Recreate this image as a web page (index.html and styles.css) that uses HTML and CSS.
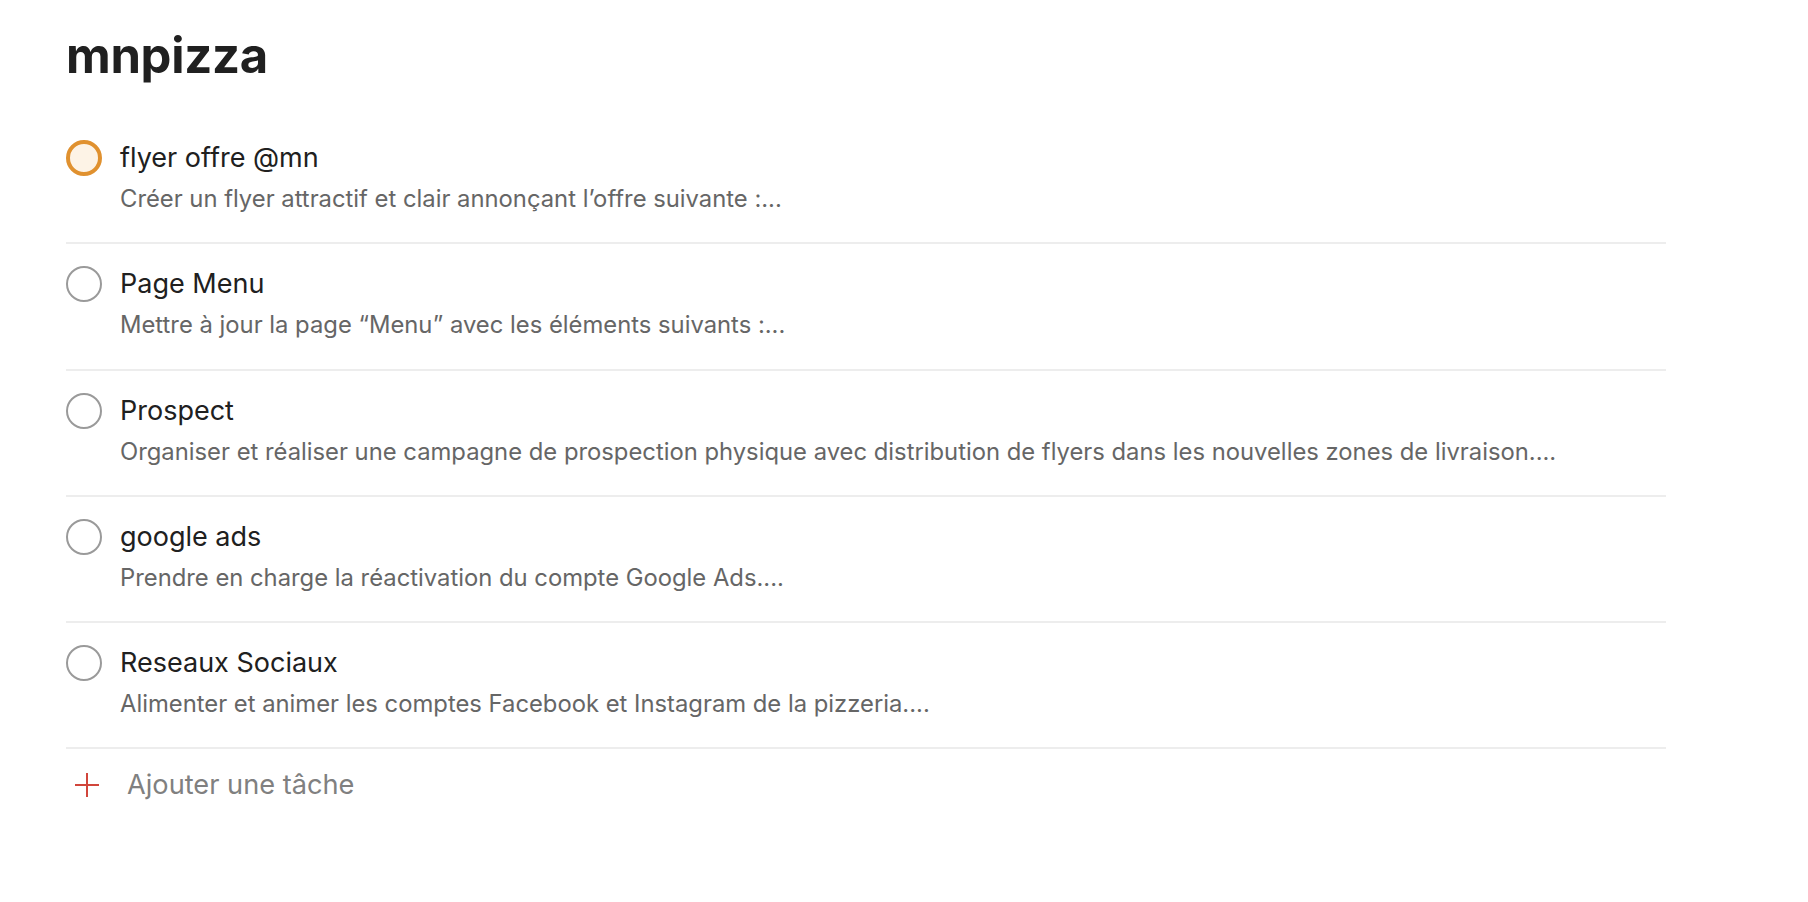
FILE: index.html
```html
<!DOCTYPE html>
<html lang="fr">
<head>
<meta charset="utf-8">
<title>mnpizza</title>
<link rel="stylesheet" href="styles.css">
</head>
<body>
<main class="page">
  <h1 class="project-title">mnpizza</h1>
  <ul class="task-list">
    <li class="task">
      <span class="check check-p3"></span>
      <div class="task-body">
        <div class="task-title">flyer offre @mn</div>
        <div class="task-desc">Créer un flyer attractif et clair annonçant l’offre suivante :...</div>
      </div>
    </li>
    <li class="task">
      <span class="check"></span>
      <div class="task-body">
        <div class="task-title">Page Menu</div>
        <div class="task-desc">Mettre à jour la page “Menu” avec les éléments suivants :...</div>
      </div>
    </li>
    <li class="task">
      <span class="check"></span>
      <div class="task-body">
        <div class="task-title">Prospect</div>
        <div class="task-desc">Organiser et réaliser une campagne de prospection physique avec distribution de flyers dans les nouvelles zones de livraison....</div>
      </div>
    </li>
    <li class="task">
      <span class="check"></span>
      <div class="task-body">
        <div class="task-title">google ads</div>
        <div class="task-desc">Prendre en charge la réactivation du compte Google Ads....</div>
      </div>
    </li>
    <li class="task">
      <span class="check"></span>
      <div class="task-body">
        <div class="task-title">Reseaux Sociaux</div>
        <div class="task-desc">Alimenter et animer les comptes Facebook et Instagram de la pizzeria....</div>
      </div>
    </li>
  </ul>
  <button class="add-task" type="button">
    <svg class="plus" width="26" height="26" viewBox="0 0 26 26" aria-hidden="true">
      <path d="M13 1v24M1 13h24" stroke="#d1453b" stroke-width="2" fill="none"/>
    </svg>
    <span class="add-label">Ajouter une tâche</span>
  </button>
</main>
</body>
</html>
```

FILE: styles.css
```css
* { box-sizing: border-box; }

html, body {
  margin: 0;
  padding: 0;
  background: #ffffff;
}

body {
  font-family: Inter, "Noto Sans", "Liberation Sans", sans-serif;
  color: #202020;
}

.page {
  width: 1600px;
  margin-left: 66px;
  padding-top: 27px;
}

.project-title {
  margin: 0 0 33px 0;
  font-size: 49px;
  line-height: 58px;
  font-weight: 700;
  color: #202020;
  letter-spacing: -0.3px;
}

.task-list {
  list-style: none;
  margin: 0;
  padding: 0;
}

.task {
  display: flex;
  gap: 18px;
  padding: 22px 0 27.25px 0;
  border-bottom: 2px solid #ededed;
}

.check {
  flex: 0 0 36px;
  width: 36px;
  height: 36px;
  border-radius: 50%;
  border: 2px solid #9a9a9a;
  background: #ffffff;
}

.check-p3 {
  border: 4px solid #e0912f;
  background: #fdf3e6;
}

.task-body {
  display: flex;
  flex-direction: column;
  min-width: 0;
}

.task-title {
  font-size: 27px;
  line-height: 36px;
  color: #202020;
}

.task-desc {
  margin-top: 7px;
  font-size: 23.8px;
  line-height: 32px;
  color: #666666;
}

.add-task {
  display: flex;
  align-items: center;
  gap: 27px;
  margin: 0;
  padding: 18px 0 0 8px;
  border: 0;
  background: none;
  font-family: inherit;
  cursor: pointer;
}

.plus {
  display: block;
}

.add-label {
  font-size: 27.2px;
  line-height: 36px;
  color: #808080;
}
```
